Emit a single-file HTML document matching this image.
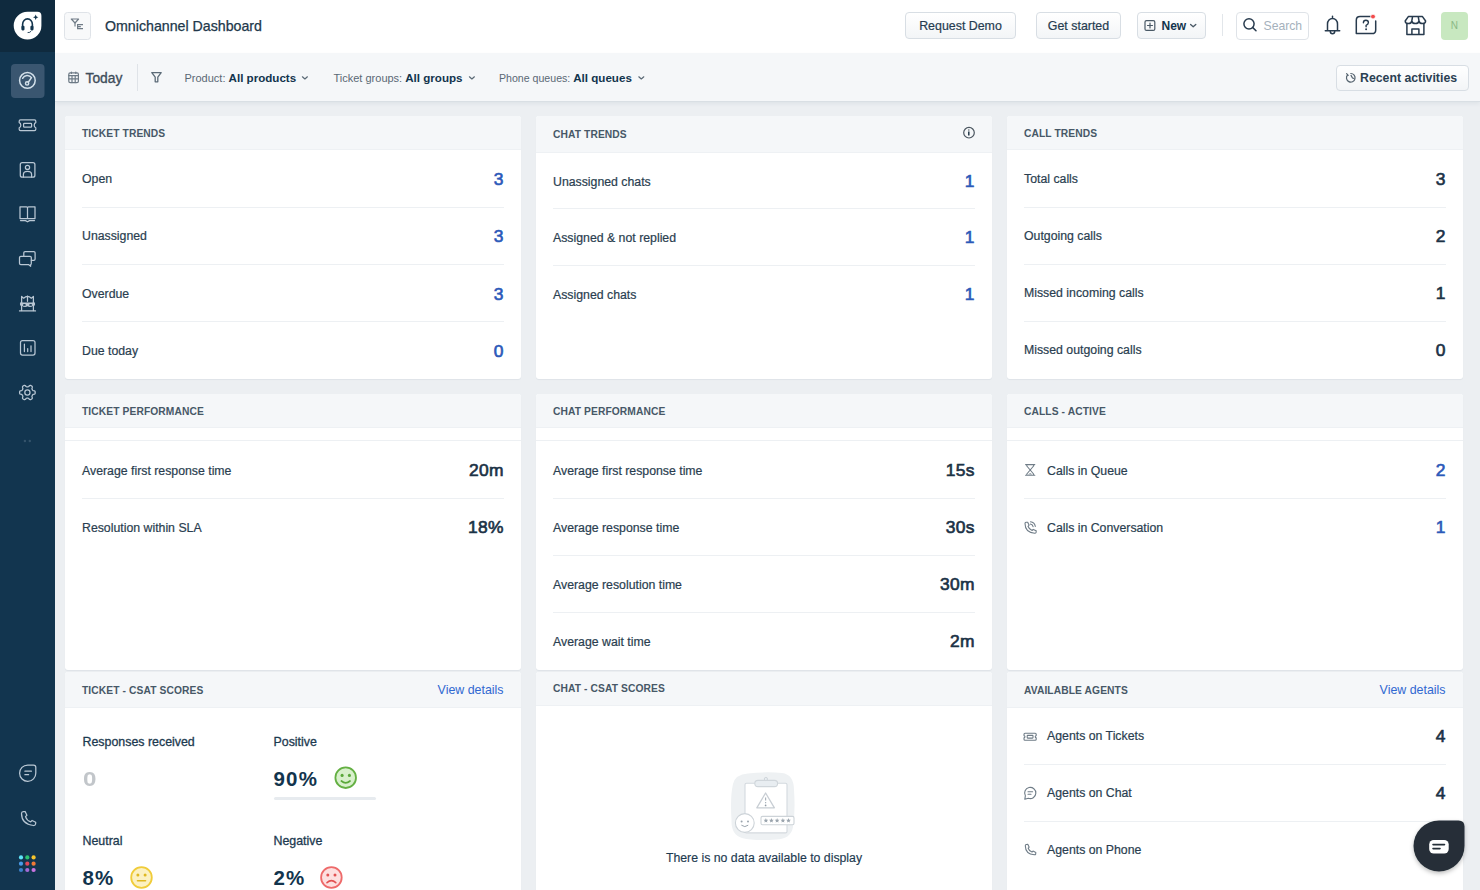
<!DOCTYPE html>
<html><head><meta charset="utf-8">
<style>
*{box-sizing:border-box;margin:0;padding:0}
html,body{width:1480px;height:890px;overflow:hidden;background:#eceff2;font-family:"Liberation Sans",sans-serif;color:#12344d}
.abs{position:absolute}
#side{position:absolute;left:0;top:0;width:55px;height:890px;background:#12354f}
#sidetop{position:absolute;left:0;top:0;width:55px;height:52px;background:#0f2a3e}
#hdr{position:absolute;left:55px;top:0;width:1425px;height:53px;background:#fff}
#fbar{position:absolute;left:55px;top:53px;width:1425px;height:49px;background:#f5f7f9;border-bottom:1px solid #d9dfe4;box-shadow:0 2px 4px rgba(18,52,77,.06)}
.btn{position:absolute;top:12px;height:27px;border:1px solid #d8dee4;border-radius:4px;background:linear-gradient(#fff,#f3f5f7);font-size:13px;color:#12344d;display:flex;align-items:center;justify-content:center}
.card{position:absolute;width:456px;background:#fff;border-radius:3px;overflow:hidden;box-shadow:0 1px 1px rgba(18,52,77,.06)}
.ch{position:absolute;left:0;top:0;width:100%;background:#f5f7f9;border-bottom:1px solid #eef1f4}
.ct{position:absolute;left:17px;font-size:10.25px;font-weight:700;color:#475867;letter-spacing:0.1px}
.lbl{position:absolute;left:17px;font-size:12.3px;color:#2a3e50;line-height:14px;white-space:nowrap;-webkit-text-stroke:0.2px #2a3e50}
.num{position:absolute;right:17.1px;font-size:17.4px;font-weight:400;line-height:20px;letter-spacing:0.4px;color:#2b59b9;-webkit-text-stroke:0.65px currentColor}
.dk{color:#1b3246}
.div{position:absolute;left:17px;right:17px;height:1px;background:#edf0f3}
.lk{font-size:12.4px;line-height:14px;color:#3068d1}
.sl{font-size:12.4px;line-height:14px;color:#1d3a50;white-space:nowrap;-webkit-text-stroke:0.3px #1d3a50}
.big{font-size:20.5px;line-height:22px;font-weight:700;color:#12344d;letter-spacing:1.2px}
.si{position:absolute;left:17px;width:21px;height:21px}
</style></head>
<body>
<div id="side"></div>
<div id="sidetop"></div>
<svg class="abs" style="left:0;top:0" width="55" height="890" viewBox="0 0 55 890">
<path d="M27.7,11.8 H37.4 Q41.4,11.8 41.4,15.8 V25.7 A13.85,13.9 0 1 1 27.7,11.8 Z" fill="#fff"/>
<path d="M22.6,28.5 V24.5 A4.9,5.6 0 0 1 32.4,24.5 V28.5" fill="none" stroke="#12344d" stroke-width="1.6"/>
<rect x="21.4" y="25.8" width="3.1" height="4.6" rx="1.1" fill="#12344d"/>
<rect x="30.4" y="25.8" width="3.1" height="4.6" rx="1.1" fill="#12344d"/>
<path d="M27.6,32.6 Q30.2,32.8 31.2,31" fill="none" stroke="#12344d" stroke-width="0.9"/>
<path d="M35.7,14.6 Q36,17 38.4,17.3 Q36,17.6 35.7,20 Q35.4,17.6 33,17.3 Q35.4,17 35.7,14.6Z" fill="#12344d"/>
<rect x="11" y="64" width="33.5" height="34" rx="4" fill="#3a5670"/>
<g fill="none" stroke="#d3e0ea" stroke-width="1.5" stroke-linecap="round" stroke-linejoin="round">
<circle cx="27.4" cy="80.4" r="7.8"/>
<path d="M22.6,78.3 A5.2,5.2 0 0 1 31.5,77.6 L28.3,82.2"/>
<circle cx="27.1" cy="83.4" r="1.6"/>
</g>
<g fill="none" stroke="#b9c7d4" stroke-width="1.25" stroke-linecap="round" stroke-linejoin="round">
<path d="M20.5,119.8 H34.5 Q35.8,119.8 35.8,121.2 V122.6 Q34.2,123 34.2,125.2 Q34.2,127.4 35.8,127.8 V129.3 Q35.8,130.7 34.5,130.7 H20.5 Q19.2,130.7 19.2,129.3 V127.8 Q20.8,127.4 20.8,125.2 Q20.8,123 19.2,122.6 V121.2 Q19.2,119.8 20.5,119.8Z"/>
<rect x="23.6" y="123.4" width="8" height="3.8" rx="0.8"/>
<rect x="20.3" y="162.6" width="14.6" height="14.6" rx="2"/>
<circle cx="27.5" cy="167.4" r="2.1"/>
<path d="M23.4,177 V174.5 Q23.4,171.4 27.5,171.4 Q31.6,171.4 31.6,174.5 V177"/>
<path d="M20,206.8 H26.5 Q27.5,206.8 27.5,207.8 V218.5 H20 Z M35,206.8 H28.5 Q27.5,206.8 27.5,207.8 V218.5 H35 Z"/>
<path d="M20.5,220.6 H25.5 L27.5,221.8 L29.5,220.6 H34.5"/>
<path d="M23.8,256.3 V252.8 Q23.8,251.5 25.1,251.5 H33.8 Q35.1,251.5 35.1,252.8 V259 Q35.1,260.3 33.8,260.3 H31.3"/>
<path d="M20.8,256.3 H30 Q31.3,256.3 31.3,257.6 V263.3 Q31.3,264.6 30.6,264.6 V266.3 L28.5,264.6 H20.8 Q19.5,264.6 19.5,263.3 V257.6 Q19.5,256.3 20.8,256.3Z"/>
<path d="M21.6,310.6 V296.4 L23.6,298.2 Q27.5,294.6 31.4,298.2 L33.4,296.4 V310.6"/>
<path d="M27.5,296 V301.3 M19.5,310.9 H35.5 M21.6,302.2 Q19.4,304 21.6,305.9 M33.4,302.2 Q35.6,304 33.4,305.9"/>
</g>
<path d="M21.6,302.4 H33.4 V305.4 Q30.5,307.9 27.5,306.3 Q24.5,307.9 21.6,305.4 Z" fill="#b9c7d4"/>
<ellipse cx="24.4" cy="304.9" rx="1.5" ry="0.85" fill="#12344d"/><ellipse cx="30.6" cy="304.9" rx="1.5" ry="0.85" fill="#12344d"/>
<g fill="none" stroke="#b9c7d4" stroke-width="1.25" stroke-linecap="round" stroke-linejoin="round">
<rect x="20.5" y="340.5" width="14.5" height="14.5" rx="2"/>
<path d="M24.4,344.2 V351.6 M27.7,348.6 V351.6 M31,345.8 V351.6"/>
<path d="M35.20,392.50 L35.18,392.91 L35.12,393.31 L34.98,393.70 L34.63,394.04 L33.92,394.25 L33.21,394.39 L32.84,394.59 L32.64,394.83 L32.48,395.09 L32.34,395.35 L32.19,395.61 L32.04,395.87 L31.93,396.17 L31.94,396.59 L32.17,397.27 L32.34,397.99 L32.23,398.46 L31.97,398.78 L31.64,399.04 L31.30,399.25 L30.94,399.44 L30.56,399.60 L30.15,399.67 L29.68,399.52 L29.15,399.02 L28.67,398.48 L28.31,398.25 L28.00,398.20 L27.70,398.20 L27.40,398.20 L27.10,398.20 L26.80,398.20 L26.49,398.25 L26.13,398.48 L25.65,399.02 L25.12,399.52 L24.65,399.67 L24.24,399.60 L23.86,399.44 L23.50,399.25 L23.16,399.04 L22.83,398.78 L22.57,398.46 L22.46,397.99 L22.63,397.27 L22.86,396.59 L22.87,396.17 L22.76,395.87 L22.61,395.61 L22.46,395.35 L22.32,395.09 L22.16,394.83 L21.96,394.59 L21.59,394.39 L20.88,394.25 L20.17,394.04 L19.82,393.70 L19.68,393.31 L19.62,392.91 L19.60,392.50 L19.62,392.09 L19.68,391.69 L19.82,391.30 L20.17,390.96 L20.88,390.75 L21.59,390.61 L21.96,390.41 L22.16,390.17 L22.32,389.91 L22.46,389.65 L22.61,389.39 L22.76,389.13 L22.87,388.83 L22.86,388.41 L22.63,387.73 L22.46,387.01 L22.57,386.54 L22.83,386.22 L23.16,385.96 L23.50,385.75 L23.86,385.56 L24.24,385.40 L24.65,385.33 L25.12,385.48 L25.65,385.98 L26.13,386.52 L26.49,386.75 L26.80,386.80 L27.10,386.80 L27.40,386.80 L27.70,386.80 L28.00,386.80 L28.31,386.75 L28.67,386.52 L29.15,385.98 L29.68,385.48 L30.15,385.33 L30.56,385.40 L30.94,385.56 L31.30,385.75 L31.64,385.96 L31.97,386.22 L32.23,386.54 L32.34,387.01 L32.17,387.73 L31.94,388.41 L31.93,388.83 L32.04,389.13 L32.19,389.39 L32.34,389.65 L32.48,389.91 L32.64,390.17 L32.84,390.41 L33.21,390.61 L33.92,390.75 L34.63,390.96 L34.98,391.30 L35.12,391.69 L35.18,392.09 Z"/>
<circle cx="27.4" cy="392.5" r="2.6"/>
<path d="M27.7,765 H33.5 Q35.8,765 35.8,767.3 V773 A8.1,8.2 0 1 1 27.7,765 Z"/>
<path d="M24.9,771.2 H31.4 M24.9,774.7 H28.6"/>
<path d="M23.3,811.6 L25.1,811.5 L26.9,815.2 L25.5,816.6 Q26.8,820.5 30.7,821.9 L32.1,820.5 L35.7,822.3 L35.6,824 Q35.4,825.5 33.5,825.5 Q21.6,824.2 21.5,813.5 Q21.5,811.7 23.3,811.6Z"/>
</g>
<circle cx="24.9" cy="441" r="1.2" fill="#34536b"/><circle cx="29.8" cy="441" r="1.2" fill="#34536b"/>
<circle cx="21" cy="857.4" r="2.1" fill="#5fe3f7"/><circle cx="27.3" cy="857.4" r="2.1" fill="#2dc26f"/><circle cx="33.6" cy="857.4" r="2.1" fill="#f6c42c"/>
<circle cx="21" cy="863.7" r="2.1" fill="#4a9be9"/><circle cx="27.3" cy="863.7" r="2.1" fill="#e0475b"/><circle cx="33.6" cy="863.7" r="2.1" fill="#f07a35"/>
<circle cx="21" cy="870" r="2.1" fill="#3c80ca"/><circle cx="27.3" cy="870" r="2.1" fill="#a46bd7"/><circle cx="33.6" cy="870" r="2.1" fill="#c974e1"/>
</svg>
<div id="hdr"></div>
<div id="fbar"></div>

<!-- header content -->
<div class="abs" style="left:64px;top:12px;width:27px;height:27.5px;border:1px solid #dfe3e8;border-radius:3.5px;background:#f8f9fa"></div>
<div class="abs" style="left:105px;top:18px;font-size:14.2px;line-height:17px;color:#22384b;-webkit-text-stroke:0.25px #22384b;white-space:nowrap">Omnichannel Dashboard</div>

<div class="btn" style="left:905px;width:111px;font-size:12.4px;color:#263c50;padding-top:1px;-webkit-text-stroke:0.2px #263c50">Request Demo</div>
<div class="btn" style="left:1036px;width:85px;font-size:12.4px;color:#263c50;padding-top:1px;-webkit-text-stroke:0.2px #263c50">Get started</div>
<div class="btn" style="left:1137px;width:69px;font-size:12px;font-weight:700;padding-left:0;justify-content:flex-start"><span style="position:absolute;left:23.5px;top:6px;line-height:14px">New</span></div>
<div class="abs" style="left:1222px;top:14px;width:1px;height:22px;background:#e2e6ea"></div>
<div class="abs" style="left:1236px;top:12px;width:73px;height:27.5px;border:1px solid #dfe3e8;border-radius:4px;background:#fff"></div>
<div class="abs" style="left:1263.5px;top:18.5px;font-size:12.2px;line-height:14px;color:#a5b1bc">Search</div>
<div class="abs" style="left:1440.5px;top:12px;width:27.5px;height:27.5px;border-radius:4px;background:#c8e8c0;font-size:10px;color:#8bb886;text-align:center;line-height:27.5px">N</div>

<!-- filter bar -->
<div class="abs" style="left:85.5px;top:70px;font-size:13.8px;line-height:17px;color:#3f4e5b;-webkit-text-stroke:0.35px #3f4e5b">Today</div>
<div class="abs" style="left:137px;top:64px;width:1px;height:27px;background:#dfe3e8"></div>
<div class="abs" style="left:184.5px;top:71px;font-size:11px;line-height:13px;color:#5a6875;white-space:nowrap">Product: <b style="font-size:11.6px;color:#12344d">All products</b></div>
<div class="abs" style="left:333.5px;top:71px;font-size:11px;line-height:13px;color:#5a6875;white-space:nowrap">Ticket groups: <b style="font-size:11.6px;color:#12344d">All groups</b></div>
<div class="abs" style="left:499px;top:71px;font-size:10.6px;line-height:13px;color:#5a6875;white-space:nowrap">Phone queues: <b style="font-size:11.6px;color:#12344d">All queues</b></div>
<div class="btn" style="left:1335.5px;top:64.5px;width:133px;height:26.5px"></div>
<div class="abs" style="left:1360px;top:71px;font-size:12.3px;line-height:14px;font-weight:700;color:#2a4052;white-space:nowrap">Recent activities</div>

<svg class="abs" style="left:0;top:0" width="1480" height="101" viewBox="0 0 1480 101">
<g fill="none" stroke="#6f7b86" stroke-width="1.15" stroke-linejoin="round">
<path d="M71.3,19 H78.6 L75,23 Z"/><path d="M75,22.5 V26.6"/>
<path d="M77.6,24.6 H83 M77.6,26.6 H80.8 M77.6,28.6 H83 M77.6,24 V29.2"/>
</g>
<g fill="none" stroke="#4a5966" stroke-width="1.2" stroke-linejoin="round" stroke-linecap="round">
<rect x="1145" y="20.6" width="9.8" height="9.8" rx="1.5"/><path d="M1150,23 V28 M1147.5,25.5 H1152.5"/>
<path d="M1190.6,24.4 L1193.2,26.8 L1195.8,24.4" stroke-width="1.3"/>
</g>
<g fill="none" stroke="#283b4e" stroke-width="1.5" stroke-linecap="round" stroke-linejoin="round">
<circle cx="1249" cy="23.8" r="5.1"/><path d="M1252.8,27.6 L1256,30.8"/>
<path d="M1327.5,30.6 V24 A5,5.6 0 0 1 1337.5,24 V30.6 M1325.3,30.8 H1339.7 M1332.5,16.3 V17.6"/>
<path d="M1330.3,31.5 A2.2,2.2 0 0 0 1334.7,31.5" />
<path d="M1371.5,16.5 H1360 Q1356.3,16.5 1356.3,20.2 V33.6 H1372 Q1375.7,33.6 1375.7,29.9 V21"/>
<path d="M1363.4,22.8 Q1363.4,20.3 1365.9,20.3 Q1368.4,20.3 1368.4,22.6 Q1368.4,24.3 1366.1,25.3 V26.8" stroke-width="1.4"/>
<path d="M1406.9,23.4 V34.6 H1423.9 V23.4 M1411.9,34.4 V29 H1418.9 V34.4"/>
<path d="M1408.5,16.4 H1422.3 L1425.6,21 Q1425.6,23.6 1422.3,23.6 Q1419.6,23.6 1419,21 Q1418.4,23.6 1415.4,23.6 Q1412.4,23.6 1411.8,21 Q1411.2,23.6 1408.5,23.6 Q1405.2,23.6 1405.2,21 Z M1411.8,21 L1412.6,16.4 M1419,21 L1418.2,16.4"/>
</g>
<circle cx="1366.1" cy="29.2" r="0.95" fill="#283b4e"/>
<circle cx="1373" cy="16.6" r="2.4" fill="#f24b4b" stroke="#fff" stroke-width="0.8"/>
<g fill="none" stroke="#6d7a86" stroke-width="1.2" stroke-linejoin="round" stroke-linecap="round">
<rect x="68.8" y="72.8" width="9.6" height="9.8" rx="1.4"/>
<path d="M68.8,75.6 H78.4 M68.8,78.8 H78.4 M72,75.6 V82.6 M75.2,75.6 V82.6 M71.4,72 V73.4 M75.8,72 V73.4"/>
</g>
<g fill="none" stroke="#5c6b78" stroke-width="1.3" stroke-linejoin="round" stroke-linecap="round">
<path d="M151.8,72.6 H161.2 L157.8,77.2 V81.8 L155.2,81.8 V77.2 Z"/>
</g>
<g fill="none" stroke="#5a6975" stroke-width="1.2" stroke-linejoin="round" stroke-linecap="round">
<path d="M302.4,76.8 L304.9,79 L307.4,76.8 M469.4,76.8 L471.9,79 L474.4,76.8 M638.8,76.8 L641.3,79 L643.8,76.8"/>
</g>
<g fill="none" stroke="#56646f" stroke-width="1.2" stroke-linecap="round">
<path d="M1347.5,75 A4.3,4.3 0 1 0 1350.8,73.5"/><path d="M1351,75.4 L1352.5,78 L1354,78.3"/><path d="M1346.6,73.6 L1348.2,75.4"/>
</g>
</svg>
<!-- Row 1 -->
<div class="card" style="left:65px;top:116px;height:263px">
  <div class="ch" style="height:34px"></div>
  <div class="ct" style="top:11.7px">TICKET TRENDS</div>
  <div class="lbl" style="top:56.0px">Open</div><div class="num" style="top:53px">3</div>
  <div class="div" style="top:91px"></div>
  <div class="lbl" style="top:113.0px">Unassigned</div><div class="num" style="top:110px">3</div>
  <div class="div" style="top:148px"></div>
  <div class="lbl" style="top:171.0px">Overdue</div><div class="num" style="top:168px">3</div>
  <div class="div" style="top:205px"></div>
  <div class="lbl" style="top:228.0px">Due today</div><div class="num" style="top:225px">0</div>
</div>

<div class="card" style="left:536px;top:116px;height:263px">
  <div class="ch" style="height:37px"></div>
  <div class="ct" style="top:13px">CHAT TRENDS</div>
  <svg class="abs" style="left:425px;top:9px" width="16" height="16" viewBox="0 0 16 16"><circle cx="8" cy="7.7" r="5.3" fill="none" stroke="#4b5660" stroke-width="1.2"/><path d="M7.8,6.6 V10.6" stroke="#1f3445" stroke-width="1.5"/><circle cx="7.8" cy="4.9" r="0.75" fill="#4b5660"/></svg>
  <div class="lbl" style="top:59.0px">Unassigned chats</div><div class="num" style="top:55px">1</div>
  <div class="div" style="top:92px"></div>
  <div class="lbl" style="top:115.0px">Assigned &amp; not replied</div><div class="num" style="top:111px">1</div>
  <div class="div" style="top:149px"></div>
  <div class="lbl" style="top:172.0px">Assigned chats</div><div class="num" style="top:168px">1</div>
</div>

<div class="card" style="left:1007px;top:116px;height:263px">
  <div class="ch" style="height:34px"></div>
  <div class="ct" style="top:11.7px">CALL TRENDS</div>
  <div class="lbl" style="top:56.4px">Total calls</div><div class="num dk" style="top:53.0px">3</div>
  <div class="div" style="top:91px"></div>
  <div class="lbl" style="top:113.4px">Outgoing calls</div><div class="num dk" style="top:110.0px">2</div>
  <div class="div" style="top:148px"></div>
  <div class="lbl" style="top:170.4px">Missed incoming calls</div><div class="num dk" style="top:167.0px">1</div>
  <div class="div" style="top:205px"></div>
  <div class="lbl" style="top:227.4px">Missed outgoing calls</div><div class="num dk" style="top:224.0px">0</div>
</div>

<!-- Row 2 -->
<div class="card" style="left:65px;top:394px;height:276px">
  <div class="ch" style="height:34px"></div>
  <div class="ct" style="top:11.7px">TICKET PERFORMANCE</div>
  <div class="div" style="top:46px;left:0;right:0"></div>
  <div class="lbl" style="top:70.0px">Average first response time</div><div class="num dk" style="top:66px">20m</div>
  <div class="div" style="top:104px"></div>
  <div class="lbl" style="top:127.0px">Resolution within SLA</div><div class="num dk" style="top:123px">18%</div>
</div>

<div class="card" style="left:536px;top:394px;height:276px">
  <div class="ch" style="height:34px"></div>
  <div class="ct" style="top:11.7px">CHAT PERFORMANCE</div>
  <div class="div" style="top:46px;left:0;right:0"></div>
  <div class="lbl" style="top:70.0px">Average first response time</div><div class="num dk" style="top:66px">15s</div>
  <div class="div" style="top:104px"></div>
  <div class="lbl" style="top:127.0px">Average response time</div><div class="num dk" style="top:123px">30s</div>
  <div class="div" style="top:161px"></div>
  <div class="lbl" style="top:184.0px">Average resolution time</div><div class="num dk" style="top:180px">30m</div>
  <div class="div" style="top:218px"></div>
  <div class="lbl" style="top:241.0px">Average wait time</div><div class="num dk" style="top:237px">2m</div>
</div>

<div class="card" style="left:1007px;top:394px;height:276px">
  <div class="ch" style="height:34px"></div>
  <div class="ct" style="top:11.7px">CALLS - ACTIVE</div>
  <div class="div" style="top:46px;left:0;right:0"></div>
  <div class="lbl" style="top:70.0px;left:40px">Calls in Queue</div><div class="num" style="top:66px">2</div>
  <div class="div" style="top:104px"></div>
  <div class="lbl" style="top:127.0px;left:40px">Calls in Conversation</div><div class="num" style="top:123px">1</div>
  <svg class="abs" style="left:0;top:0" width="456" height="276" viewBox="0 0 456 276">
   <g fill="none" stroke="#6f7c87" stroke-width="1.1" stroke-linejoin="round" stroke-linecap="round">
    <path d="M18.6,70.6 H27.8 M18.6,81.3 H27.8 M19.8,70.6 V72 L23.2,76 L19.8,80 V81.3 M26.6,70.6 V72 L23.2,76 L26.6,80 V81.3"/>
    <path d="M21,80.6 L23.2,79 L25.4,80.6Z" fill="#8a96a0" stroke="none"/>
    <path d="M19,128.3 L20.7,128.2 L22.1,131.2 L21,132.3 Q22.1,135.4 25.1,136.5 L26.2,135.4 L29.2,136.8 L29.1,138.4 Q28.9,139.3 27.6,139.3 Q18.1,138.5 18,129.6 Q18,128.4 19,128.3Z"/>
    <path d="M23.5,127.8 Q27.6,128.3 28.3,132.4 M23.3,130 Q25.7,130.4 26.1,132.7"/>
   </g>
  </svg>
</div>

<!-- Row 3 -->
<div class="card" style="left:65px;top:672px;height:230px">
  <div class="ch" style="height:36px"></div>
  <div class="ct" style="top:12.5px">TICKET - CSAT SCORES</div>
  <div class="abs lk" style="right:17.5px;top:11px">View details</div>
  <div class="abs sl" style="left:17.5px;top:63px">Responses received</div>
  <div class="abs big" style="left:17.5px;top:96px;color:#c2c6ca;transform:scaleX(1.18);transform-origin:left">0</div>
  <div class="abs sl" style="left:208.5px;top:63px">Positive</div>
  <div class="abs big" style="left:208.5px;top:96px">90%</div>
  <div class="abs" style="left:208.5px;top:125px;width:102px;height:3px;border-radius:2px;background:#e7ebef"></div>
  <div class="abs sl" style="left:17.5px;top:162px">Neutral</div>
  <div class="abs big" style="left:17.5px;top:195px">8%</div>
  <div class="abs sl" style="left:208.5px;top:162px">Negative</div>
  <div class="abs big" style="left:208.5px;top:195px">2%</div>
  <svg class="abs" style="left:0;top:0" width="456" height="230" viewBox="0 0 456 230">
    <g stroke-width="1.8" stroke-linecap="round">
      <circle cx="280.7" cy="105.7" r="10.3" fill="#d8f0cc" stroke="#64b043"/>
      <circle cx="277.1" cy="103.4" r="1.55" fill="#5aa83a" stroke="none"/><circle cx="284.4" cy="103.4" r="1.55" fill="#5aa83a" stroke="none"/>
      <path d="M276.4,109 Q280.7,112.6 285,109" fill="none" stroke="#5aa83a" stroke-width="1.7"/>
      <circle cx="76.5" cy="205.5" r="10.3" fill="#fcf1c2" stroke="#f0cc3a"/>
      <circle cx="72.9" cy="203" r="1.5" fill="#e0b820" stroke="none"/><circle cx="80.1" cy="203" r="1.5" fill="#e0b820" stroke="none"/>
      <path d="M72.5,208.8 H80.5" fill="none" stroke="#e0b820" stroke-width="1.6"/>
      <circle cx="266.4" cy="205.5" r="10.3" fill="#fde0e0" stroke="#ee6a6a"/>
      <circle cx="262.8" cy="203" r="1.5" fill="#e25252" stroke="none"/><circle cx="270" cy="203" r="1.5" fill="#e25252" stroke="none"/>
      <path d="M262,210.6 Q266.4,206.6 270.8,210.6" fill="none" stroke="#e25252" stroke-width="1.6"/>
    </g>
  </svg>
</div>
<div class="card" style="left:536px;top:672px;height:230px">
  <div class="ch" style="height:34px"></div>
  <div class="ct" style="top:11px">CHAT - CSAT SCORES</div>
  <svg class="abs" style="left:0;top:0" width="456" height="230" viewBox="0 0 456 230">
    <path d="M212,101.5 Q230,99.5 246,101 Q258,102.5 258,118 Q259.5,140 257,155 Q255,167 240,167.5 Q218,169 206,166 Q195,163 195.5,148 Q194,125 197,112 Q199,102.5 212,101.5Z" fill="#eef1f3"/>
    <rect x="209" y="111.3" width="42" height="49.6" rx="1.5" fill="#fff" stroke="#d3d9de" stroke-width="1.1"/>
    <rect x="218.8" y="108.4" width="22.8" height="6.2" rx="3.1" fill="#e8edf1" stroke="#d0d6db" stroke-width="1.1"/>
    <circle cx="229.9" cy="107" r="1.6" fill="#e8edf1" stroke="#d0d6db" stroke-width="1"/>
    <path d="M229.6,121 L238.4,135.8 H220.8 Z" fill="#fff" stroke="#c8ced4" stroke-width="1.3" stroke-linejoin="round"/>
    <path d="M229.6,125.5 V128.4 M229.6,130 V131.3" stroke="#a9b2ba" stroke-width="1.2"/><circle cx="229.6" cy="133.4" r="0.85" fill="#8e99a3"/>
    <rect x="225" y="144.4" width="33" height="8.4" rx="1.5" fill="#fff" stroke="#cdd3d8" stroke-width="1.1"/>
    <polygon points="229.90,146.10 230.55,147.71 232.28,147.83 230.95,148.94 231.37,150.62 229.90,149.70 228.43,150.62 228.85,148.94 227.52,147.83 229.25,147.71" fill="#9aa4ad"/><polygon points="235.40,146.10 236.05,147.71 237.78,147.83 236.45,148.94 236.87,150.62 235.40,149.70 233.93,150.62 234.35,148.94 233.02,147.83 234.75,147.71" fill="#9aa4ad"/><polygon points="241.10,146.10 241.75,147.71 243.48,147.83 242.15,148.94 242.57,150.62 241.10,149.70 239.63,150.62 240.05,148.94 238.72,147.83 240.45,147.71" fill="#9aa4ad"/><polygon points="246.90,146.10 247.55,147.71 249.28,147.83 247.95,148.94 248.37,150.62 246.90,149.70 245.43,150.62 245.85,148.94 244.52,147.83 246.25,147.71" fill="#9aa4ad"/><polygon points="252.50,146.10 253.15,147.71 254.88,147.83 253.55,148.94 253.97,150.62 252.50,149.70 251.03,150.62 251.45,148.94 250.12,147.83 251.85,147.71" fill="#9aa4ad"/>
    <circle cx="208.8" cy="151" r="9.4" fill="#fff" stroke="#cdd3d8" stroke-width="1.1"/>
    <circle cx="205.6" cy="149.4" r="1" fill="#9aa4ad"/><circle cx="212" cy="149.4" r="1" fill="#9aa4ad"/>
    <path d="M205.4,153.2 Q208.8,156 212.2,153.2" fill="none" stroke="#9aa4ad" stroke-width="1"/>
  </svg>
  <div class="abs" style="left:0;width:456px;top:179px;text-align:center;font-size:12.3px;line-height:14px;color:#1d3a50;-webkit-text-stroke:0.15px #1d3a50">There is no data available to display</div>
</div>
<div class="card" style="left:1007px;top:672px;height:230px">
  <div class="ch" style="height:36px"></div>
  <div class="ct" style="top:12.7px">AVAILABLE AGENTS</div>
  <div class="abs lk" style="right:17.5px;top:11px">View details</div>
  <div class="lbl" style="top:57.3px;left:40px">Agents on Tickets</div><div class="num dk" style="top:54.3px">4</div>
  <div class="div" style="top:92px"></div>
  <div class="lbl" style="top:114.3px;left:40px">Agents on Chat</div><div class="num dk" style="top:111.3px">4</div>
  <div class="div" style="top:148.5px"></div>
  <div class="lbl" style="top:171.3px;left:40px">Agents on Phone</div>
  <svg class="abs" style="left:0;top:0" width="456" height="230" viewBox="0 0 456 230">
   <g fill="none" stroke="#6f7c87" stroke-width="1.1" stroke-linejoin="round" stroke-linecap="round">
    <path d="M18,61.3 H28.2 Q29.2,61.3 29.2,62.3 V63.6 Q28.2,63.9 28.2,64.75 Q28.2,65.6 29.2,65.9 V67.2 Q29.2,68.2 28.2,68.2 H18 Q17,68.2 17,67.2 V65.9 Q18,65.6 18,64.75 Q18,63.9 17,63.6 V62.3 Q17,61.3 18,61.3Z"/><rect x="20.2" y="63.4" width="5.8" height="2.7" rx="0.5"/>
    <path d="M18.35,123.8 A5.6,5.6 0 1 1 21.3,126.3 L17.8,127.3 Z"/><path d="M21,119.8 H25.6 M21,122.2 H24"/>
    <path d="M19.3,172.5 L20.9,172.4 L22.2,175.2 L21.2,176.2 Q22.2,179.1 25,180.1 L26,179.1 L28.8,180.4 L28.7,182 Q28.5,182.8 27.3,182.8 Q18.4,182 18.3,173.7 Q18.3,172.6 19.3,172.5Z"/>
   </g>
  </svg>
</div>
<svg class="abs" style="left:1410px;top:816px;overflow:visible" width="60" height="60" viewBox="0 0 60 60">
  <defs><filter id="sh" x="-30%" y="-30%" width="160%" height="160%"><feDropShadow dx="0" dy="2" stdDeviation="2" flood-color="#000" flood-opacity="0.25"/></filter></defs>
  <path d="M29,4.6 H48.5 Q54.5,4.6 54.5,10.6 V30 A25.5,25.4 0 1 1 29,4.6Z" fill="#252f38" filter="url(#sh)"/>
  <rect x="19.2" y="24" width="19.5" height="13.5" rx="4.5" fill="#fff"/>
  <path d="M23,28.6 H34.5 M23,32.6 H30" stroke="#252f38" stroke-width="1.6" stroke-linecap="round"/>
</svg>
</body></html>
